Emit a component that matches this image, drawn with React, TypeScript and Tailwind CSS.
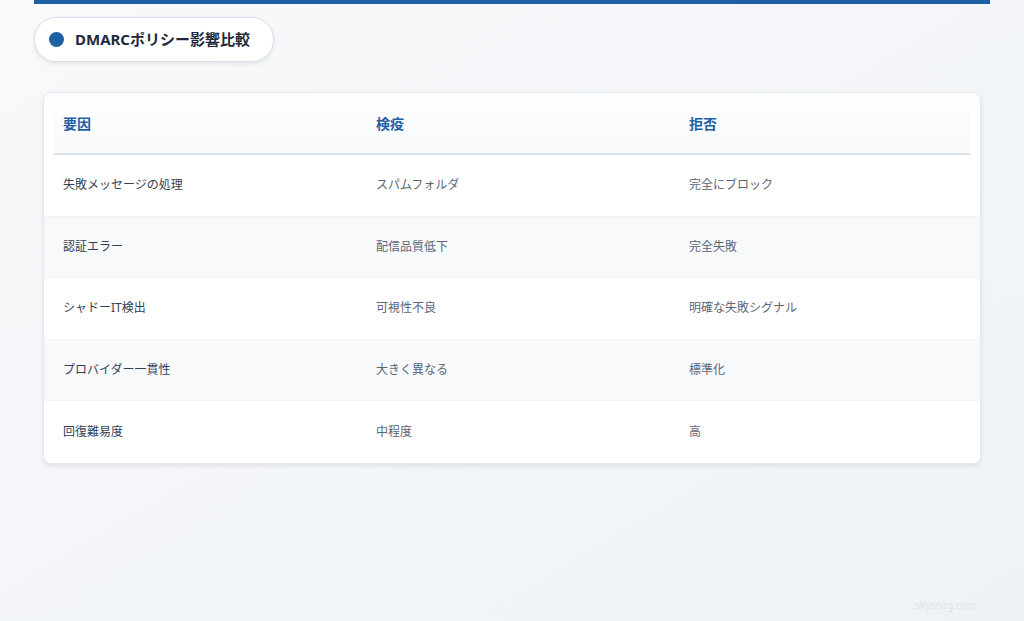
export default function App() {
  const rows = [
    ["失敗メッセージの処理", "スパムフォルダ", "完全にブロック"],
    ["認証エラー", "配信品質低下", "完全失敗"],
    ["シャドーIT検出", "可視性不良", "明確な失敗シグナル"],
    ["プロバイダー一貫性", "大きく異なる", "標準化"],
    ["回復難易度", "中程度", "高"],
  ];
  return (
    <div className="relative w-[1024px] h-[621px] overflow-hidden bg-gradient-to-br from-[#f8f9fb] to-[#eef2f6]" style={{ fontFamily: '"Noto Sans", "Noto Sans CJK JP", sans-serif' }}>
      <div className="mx-[34px] h-[4px] bg-[#1f5fa6]" />
      <div className="ml-[34px] mt-[13px] w-[240px] h-[45px] rounded-[22px] bg-white border border-[#d6dfea] shadow-[0_2px_4px_rgba(0,0,0,0.08)] flex items-center pl-[14px] gap-[11px]">
        <div className="w-[15px] h-[15px] rounded-full bg-[#1f5fa6]" />
        <span className="text-[15px] font-bold text-[#1e293b]">DMARCポリシー影響比較</span>
      </div>
      <div className="ml-[43px] mt-[30px] w-[938px] rounded-[8px] bg-white border border-[#e3e8ef] shadow-[0_2px_5px_rgba(0,0,0,0.08)] overflow-hidden">
        <div className="mx-[10px] h-[62px] grid grid-cols-[313px_313px_1fr] items-center border-b-2 border-[#dde3ec] bg-gradient-to-b from-white to-[#f6f8fa]">
          {["要因", "検疫", "拒否"].map((h) => (
            <div key={h} className="pl-[9px] text-[14px] font-bold text-[#1f5fa6]">{h}</div>
          ))}
        </div>
        {rows.map((r, i) => (
          <div key={i} className={`h-[61.5px] px-[10px] grid grid-cols-[313px_313px_1fr] items-center text-[12px] ${i % 2 === 1 ? "bg-[#f7f9fb]" : "bg-white"} ${i < rows.length - 1 ? "border-b border-[#eef1f5]" : ""}`}>
            {r.map((c, j) => (
              <div key={j} className={`pl-[9px] ${j === 0 ? "text-[#334155]" : "text-[#5b6576]"}`}>{c}</div>
            ))}
          </div>
        ))}
      </div>
      <div className="absolute right-[48px] bottom-[8px] text-[10px] text-[#dfe3e8]">skysnag.com</div>
    </div>
  );
}
